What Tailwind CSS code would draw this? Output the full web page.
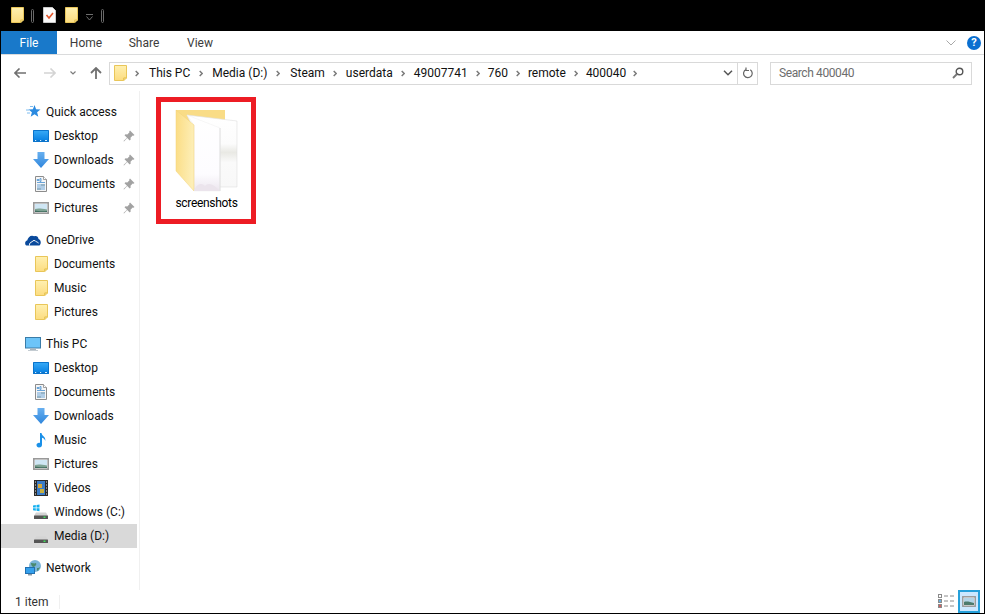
<!DOCTYPE html>
<html>
<head>
<meta charset="utf-8">
<title>400040</title>
<script src="https://cdn.jsdelivr.net/npm/@tailwindcss/browser@4"></script>
</head>
<body class="m-0 bg-black">
<svg class="absolute w-0 h-0" aria-hidden="true">
  <defs>
    <linearGradient id="gFolder" x1="0" y1="0" x2="0" y2="1"><stop offset="0" stop-color="#fff0b0"/><stop offset="1" stop-color="#fcdc80"/></linearGradient>
    <linearGradient id="gBlue" x1="0" y1="0" x2="0" y2="1"><stop offset="0" stop-color="#35a8f6"/><stop offset="1" stop-color="#0c84e4"/></linearGradient>
    <linearGradient id="gArrow" x1="0" y1="0" x2="0" y2="1"><stop offset="0" stop-color="#68b0f0"/><stop offset="1" stop-color="#2f86dc"/></linearGradient>
    <linearGradient id="gPanel" x1="0" y1="0" x2="1" y2="0.2"><stop offset="0" stop-color="#fbdc82"/><stop offset="1" stop-color="#fdeeb6"/></linearGradient>
    <linearGradient id="gPaper" x1="0" y1="0" x2="0" y2="1"><stop offset="0" stop-color="#ffffff"/><stop offset="0.78" stop-color="#fdfcff"/><stop offset="1" stop-color="#ece6ee"/></linearGradient>
    <linearGradient id="gBack" x1="0" y1="0" x2="0" y2="1"><stop offset="0" stop-color="#ffffff"/><stop offset="0.4" stop-color="#fcfcfc"/><stop offset="0.52" stop-color="#e9e9e4"/><stop offset="0.66" stop-color="#fafafa"/><stop offset="1" stop-color="#f8f8f8"/></linearGradient>
    <symbol id="folder" viewBox="0 0 13 16">
      <path d="M.5.500h12v12.500h-3v2.500H.5z" fill="url(#gFolder)" stroke="#e9c659"/>
      <path d="M10 15.500v-2.500h2.500z" fill="#f6dc8c" stroke="#e9c659" stroke-width=".8"/>
    </symbol>
    <symbol id="crumb" viewBox="0 0 4 7">
      <path d="M.7 1l2.500 2.500L.7 6" fill="none" stroke="#7a7a7a" stroke-width="1.500"/>
    </symbol>
    <symbol id="desktop" viewBox="0 0 16 16">
      <rect x="0" y="2" width="16" height="12" rx=".5" fill="#0a74cc"/>
      <rect x="1" y="3" width="14" height="9" fill="url(#gBlue)"/>
      <path d="M2 12.500h1.200M7 12.500h1.200M12 12.500h2" stroke="#d8f0ff" stroke-width="1"/>
    </symbol>
    <symbol id="download" viewBox="0 0 16 16">
      <path d="M4.500 0h7v7H16l-8 9-8-9h4.500z" fill="url(#gArrow)"/>
    </symbol>
    <symbol id="doc" viewBox="0 0 16 16">
      <path d="M2.500.500h8l3 3v12h-11z" fill="#f6f6f6" stroke="#8c8c8c"/>
      <path d="M10.500.500v3h3" fill="#fff" stroke="#8c8c8c" stroke-width=".8"/>
      <path d="M4 3.500h2v1H4zM7 2.500h1v3H7zM4 6.500h8M4 9h8M4 11h8M4 13h8" stroke="#6aa4d8" stroke-width="1" fill="none"/>
      <path d="M8 9h4M4 13h4" stroke="#7a9aa8" stroke-width="1"/>
    </symbol>
    <symbol id="picture" viewBox="0 0 16 16">
      <rect x=".8" y="2.800" width="14.400" height="10.400" fill="#fff" stroke="#999" stroke-width="1.600"/>
      <rect x="2" y="4" width="12" height="8" fill="#cfe6f4"/>
      <path d="M2 9c3-1 6-.5 12 .5V12H2z" fill="#7fa394"/>
      <path d="M2 10.500c3 .5 7 1 12 .5V12H2z" fill="#3f6c5e"/>
    </symbol>
    <symbol id="pin" viewBox="0 0 12 12">
      <path d="M7 .5l4.500 4.500-1 .8-.8-.3-2.200 2.200.2 1.800-1 1L4.200 8 1 11.500.5 11 4 7.800 1.500 5.300l1-1 1.800.2 2.200-2.200-.3-.8z" fill="#a2a2a2"/>
    </symbol>
    <symbol id="drive" viewBox="0 0 16 16">
      <path d="M3 8.500h10l2 3.500H1z" fill="#d4d4d4"/>
      <rect x="1" y="11.500" width="14" height="3.500" rx=".5" fill="#555"/>
      <rect x="10.500" y="12.500" width="2" height="1.500" fill="#3fe05a"/>
    </symbol>
  </defs>
</svg>

<div class="w-[985px] h-[614px] bg-black flex flex-col px-px pb-px overflow-hidden text-[12px] leading-none text-[#111]" style="font-family:Roboto,'Noto Sans',sans-serif">

  <!-- Title bar -->
  <div class="h-[31px] shrink-0 flex items-start">
    <svg class="w-[13px] h-4 mt-[7px] ml-[10px]"><use href="#folder"/></svg>
    <div class="w-[3px] h-[14px] mt-[9px] ml-[7px] rounded-sm border border-[#6a6a6a]"></div>
    <svg class="w-[13px] h-4 mt-[7px] ml-[9px]" viewBox="0 0 13 16">
      <path d="M.5.500h9l3 3v12H.5z" fill="#fafafa" stroke="#c9c9c9"/>
      <path d="M3.500 8l2.500 3 4-5" fill="none" stroke="#e2542a" stroke-width="1.600"/>
    </svg>
    <svg class="w-[13px] h-4 mt-[7px] ml-[9px]"><use href="#folder"/></svg>
    <svg class="w-[7px] h-[7px] mt-[14px] ml-[8px]" viewBox="0 0 7 7">
      <path d="M0 .5h7M.5 2.500l3 3.500 3-3.500" fill="none" stroke="#6e6e6e"/>
    </svg>
    <div class="w-[3px] h-[14px] mt-[9px] ml-[8px] rounded-sm border border-[#6a6a6a]"></div>
  </div>

  <!-- Ribbon tabs -->
  <div class="h-6 shrink-0 bg-white border-b border-[#dadbdc] flex items-center text-[#3c3c3c]">
    <div class="w-14 h-[23px] bg-[#1979ca] text-white flex items-center justify-center">File</div>
    <div class="w-[58px] h-[23px] flex items-center justify-center">Home</div>
    <div class="w-[58px] h-[23px] flex items-center justify-center">Share</div>
    <div class="w-[54px] h-[23px] flex items-center justify-center">View</div>
    <div class="flex-1"></div>
    <svg class="w-[10px] h-[6px] mr-[11px]" viewBox="0 0 10 6"><path d="M.5.500l4.500 4.500 4.500-4.500" fill="none" stroke="#a8a8a8"/></svg>
    <div class="w-[14px] h-[14px] mr-[3px] rounded-full bg-[#0a6fd0] text-white font-bold text-[11px] flex items-center justify-center">?</div>
  </div>

  <!-- Address row -->
  <div class="h-[36px] shrink-0 bg-white flex items-center">
    <svg class="w-3 h-[10px] ml-[13px]" viewBox="0 0 12 10"><path d="M5.500.500L1 5l4.500 4.500M1 5h11" fill="none" stroke="#707070" stroke-width="1.600"/></svg>
    <svg class="w-3 h-[10px] ml-[18px]" viewBox="0 0 12 10"><path d="M6.500.500L11 5 6.500 9.500M11 5H0" fill="none" stroke="#d4d4d4" stroke-width="1.600"/></svg>
    <svg class="w-[6px] h-1 ml-[14px]" viewBox="0 0 6 4"><path d="M.5.500L3 3 5.500.500" fill="none" stroke="#7c7c7c" stroke-width="1.200"/></svg>
    <svg class="w-3 h-3 ml-[14px]" viewBox="0 0 12 12"><path d="M1 6l5-5 5 5M6 1v11" fill="none" stroke="#707070" stroke-width="1.800"/></svg>
    <!-- Address box -->
    <div class="w-[649px] h-[23px] ml-[7px] border border-[#d9d9d9] flex items-center">
      <svg class="w-[13px] h-4 ml-[4px] shrink-0"><use href="#folder"/></svg>
      <div class="flex-1 flex items-center pl-2">
        <svg class="w-1 h-[7px] shrink-0"><use href="#crumb"/></svg><span class="ml-[10px]">This PC</span>
        <svg class="w-1 h-[7px] shrink-0 ml-[9px]"><use href="#crumb"/></svg><span class="ml-[9px]">Media (D:)</span>
        <svg class="w-1 h-[7px] shrink-0 ml-[9px]"><use href="#crumb"/></svg><span class="ml-[10px]">Steam</span>
        <svg class="w-1 h-[7px] shrink-0 ml-[8px]"><use href="#crumb"/></svg><span class="ml-[9px]">userdata</span>
        <svg class="w-1 h-[7px] shrink-0 ml-[8px]"><use href="#crumb"/></svg><span class="ml-[9px]">49007741</span>
        <svg class="w-1 h-[7px] shrink-0 ml-[8px]"><use href="#crumb"/></svg><span class="ml-[8px]">760</span>
        <svg class="w-1 h-[7px] shrink-0 ml-[8px]"><use href="#crumb"/></svg><span class="ml-[8px]">remote</span>
        <svg class="w-1 h-[7px] shrink-0 ml-[8px]"><use href="#crumb"/></svg><span class="ml-[8px]">400040</span>
        <svg class="w-1 h-[7px] shrink-0 ml-[7px]"><use href="#crumb"/></svg>
      </div>
      <svg class="w-[10px] h-[6px]" viewBox="0 0 10 6"><path d="M1 .8L5 4.800 9 .8" fill="none" stroke="#555" stroke-width="1.500"/></svg>
      <div class="w-px h-[21px] bg-[#d9d9d9] ml-1"></div>
      <svg class="w-[10px] h-3 ml-[5px] mr-1" viewBox="0 0 10 12"><path d="M3 2.500A4.300 4.300 0 1 0 7.300 2.800M3 .5v3h3" fill="none" stroke="#666" stroke-width="1.200"/></svg>
    </div>
    <!-- Search -->
    <div class="w-[202px] h-[23px] ml-3 border border-[#d9d9d9] flex items-center pl-2 pr-[7px] text-[#6d6d6d]">
      <span class="flex-1 tracking-[-0.4px]">Search 400040</span>
      <svg class="w-3 h-3" viewBox="0 0 12 12"><circle cx="7.500" cy="4.500" r="3.300" fill="none" stroke="#555" stroke-width="1.400"/><path d="M5 7l-4 4" stroke="#777" stroke-width="1.800"/></svg>
    </div>
  </div>

  <!-- Main -->
  <div class="flex-1 flex bg-white min-h-0">
    <!-- Navigation pane -->
    <nav class="w-[139px] shrink-0 border-r border-[#f0f0f0] pt-[9px] flex flex-col gap-2">
      <div class="w-[136px]">
        <div class="h-6 flex items-center pl-[24px]">
          <svg class="w-4 h-4 mr-[5px]" viewBox="0 0 16 16"><path d="M9.500 1l1.600 4.200L15.500 5.500l-3.400 2.800 1.200 4.500L9.500 10.300 5.700 12.800l1.200-4.500L3.500 5.500l4.400-.3z" fill="#2a8ae0"/><path d="M1 6h3M2 9h3M5 2.500h3" stroke="#7dbcf0" stroke-width="1"/></svg>
          Quick access
        </div>
        <div class="h-6 flex items-center pl-[32px]"><svg class="w-4 h-4 mr-[5px]"><use href="#desktop"/></svg>Desktop<span class="flex-1"></span><svg class="w-3 h-3 mr-[2px]"><use href="#pin"/></svg></div>
        <div class="h-6 flex items-center pl-[32px]"><svg class="w-4 h-4 mr-[5px]"><use href="#download"/></svg>Downloads<span class="flex-1"></span><svg class="w-3 h-3 mr-[2px]"><use href="#pin"/></svg></div>
        <div class="h-6 flex items-center pl-[32px]"><svg class="w-4 h-4 mr-[5px]"><use href="#doc"/></svg>Documents<span class="flex-1"></span><svg class="w-3 h-3 mr-[2px]"><use href="#pin"/></svg></div>
        <div class="h-6 flex items-center pl-[32px]"><svg class="w-4 h-4 mr-[5px]"><use href="#picture"/></svg>Pictures<span class="flex-1"></span><svg class="w-3 h-3 mr-[2px]"><use href="#pin"/></svg></div>
      </div>
      <div class="w-[136px]">
        <div class="h-6 flex items-center pl-[24px]">
          <svg class="w-4 h-4 mr-[5px]" viewBox="0 0 16 16"><path d="M1.500 13.500C-.5 12.500-.3 9 2.200 8.500 3 5 6 2.500 9.300 4.300c2.200-.8 4 .6 4.200 2.700 2.300.5 3.200 4.500 1 6.500z" fill="#0a4a9c"/><path d="M4.500 13.500c-.3-2 .8-3.300 2.300-3.500 1-2 3.500-2 4.500-.2 1 0 1.700.5 2 1.500" fill="none" stroke="#fff" stroke-width="1"/></svg>
          OneDrive
        </div>
        <div class="h-6 flex items-center pl-[34px]"><svg class="w-[13px] h-4 mr-[6px]"><use href="#folder"/></svg>Documents</div>
        <div class="h-6 flex items-center pl-[34px]"><svg class="w-[13px] h-4 mr-[6px]"><use href="#folder"/></svg>Music</div>
        <div class="h-6 flex items-center pl-[34px]"><svg class="w-[13px] h-4 mr-[6px]"><use href="#folder"/></svg>Pictures</div>
      </div>
      <div class="w-[136px]">
        <div class="h-6 flex items-center pl-[24px]">
          <svg class="w-4 h-4 mr-[5px]" viewBox="0 0 16 16"><rect x=".5" y="1.500" width="15" height="10.500" fill="#6cc4f8" stroke="#3a7ca8"/><rect x="5" y="12.500" width="6" height="1.500" fill="#a8b4bc"/><rect x="3" y="14" width="10" height="1" fill="#c4ccd2"/></svg>
          This PC
        </div>
        <div class="h-6 flex items-center pl-[32px]"><svg class="w-4 h-4 mr-[5px]"><use href="#desktop"/></svg>Desktop</div>
        <div class="h-6 flex items-center pl-[32px]"><svg class="w-4 h-4 mr-[5px]"><use href="#doc"/></svg>Documents</div>
        <div class="h-6 flex items-center pl-[32px]"><svg class="w-4 h-4 mr-[5px]"><use href="#download"/></svg>Downloads</div>
        <div class="h-6 flex items-center pl-[32px]"><svg class="w-4 h-4 mr-[5px]" viewBox="0 0 16 16"><path d="M7 1h1.500c.3 3 4.500 3.500 3.800 8-.5-2-2-3-3.300-3.200V13c0 1.700-1.500 2.500-3 2.500S3.500 14.500 3.500 13c0-1.500 1.800-2.600 3.500-2z" fill="#1a90e8"/></svg>Music</div>
        <div class="h-6 flex items-center pl-[32px]"><svg class="w-4 h-4 mr-[5px]"><use href="#picture"/></svg>Pictures</div>
        <div class="h-6 flex items-center pl-[32px]"><svg class="w-4 h-4 mr-[5px]" viewBox="0 0 16 16"><rect x="1" y="0" width="14" height="16" fill="#2a2a2a"/><rect x="4" y="1" width="8" height="14" fill="#3a7cc8"/><rect x="5" y="4" width="4" height="4" fill="#d8a838"/><rect x="7" y="9" width="4" height="4" fill="#c8b040"/><path d="M2 2h1M2 5h1M2 8h1M2 11h1M2 14h1M13 2h1M13 5h1M13 8h1M13 11h1M13 14h1" stroke="#e8e8e8" stroke-width="1.200"/></svg>Videos</div>
        <div class="h-6 flex items-center pl-[32px]"><svg class="w-4 h-4 mr-[5px]" viewBox="0 0 16 16"><use href="#drive"/><path d="M0 1.500l2.800-.5v2.500H0zM3.500 1l3-.5v3h-3zM0 4.200h2.800v2.500L0 6.300zM3.500 4.200h3v3l-3-.5z" fill="#12b0f0"/></svg>Windows (C:)</div>
        <div class="h-6 flex items-center pl-[32px] bg-[#d9d9d9]"><svg class="w-4 h-4 mr-[5px]"><use href="#drive"/></svg>Media (D:)</div>
      </div>
      <div class="w-[136px]">
        <div class="h-6 flex items-center pl-[24px]">
          <svg class="w-4 h-4 mr-[5px]" viewBox="0 0 16 16"><circle cx="10" cy="6" r="6" fill="#7ab4d8"/><path d="M6 3c2 0 3 1 5 0 1 2-1 3-2 4-2 0-3-2-3-4zM12 8c1 0 2 0 3-1-.5 2-2 3.500-3 4z" fill="#4a8a70"/><rect x=".5" y="7.500" width="9" height="6" fill="#35a0ec" stroke="#2270b0"/><rect x="3" y="14" width="4" height="1.500" fill="#8a9aa6"/></svg>
          Network
        </div>
      </div>
    </nav>

    <!-- Content -->
    <main class="flex-1 pl-4 pt-[6px]">
      <div class="w-[100px] h-[127px] border-[5px] border-[#ed1c24] flex flex-col items-center">
        <svg class="w-[75px] h-[92px] mt-[3px] shrink-0 self-start ml-[9px]" viewBox="0 0 75 92">
          <path d="M6 5h49v16H6z" fill="#f9dc86"/>
          <path d="M17 10l50 6v66H50z" fill="url(#gBack)" stroke="#dfdfdf" stroke-width=".6"/>
          <path d="M17 10l33 13v63H24V20z" fill="url(#gPaper)" stroke="#ececec" stroke-width=".4"/>
          <path d="M50 23v63" stroke="#e0e0e0" stroke-width="1"/>
          <path d="M6 5l18 15v66L6 66z" fill="url(#gPanel)" stroke="#f2d27a" stroke-width=".5"/>
          <path d="M24 86c2-7 8-9 11-5 3-4 9-2 15 5z" fill="#ebe4ec"/>
        </svg>
        <div class="ml-px text-center text-black tracking-[-0.3px]">screenshots</div>
      </div>
    </main>
  </div>

  <!-- Status bar -->
  <div class="h-[23px] shrink-0 bg-white flex items-center text-[#333]">
    <span class="ml-[14px]">1 item</span>
    <div class="w-px h-[14px] bg-[#f0f0f0] ml-[11px]"></div>
    <div class="flex-1"></div>
    <svg class="w-[17px] h-[15px]" viewBox="0 0 17 15">
      <rect x=".5" y=".5" width="3" height="3" fill="#fff" stroke="#8a8a8a"/><rect x=".5" y="5.500" width="3" height="3" fill="#6ab0e0" stroke="#8a8a8a"/><rect x=".5" y="10.500" width="3" height="3" fill="#d06060" stroke="#8a8a8a"/>
      <path d="M6 2h4M12 2h4M6 7h4M12 7h4M6 12h4M12 12h4" stroke="#8a8a8a"/>
    </svg>
    <div class="w-[22px] h-[23px] ml-[3px] mr-[4px] bg-[#cce8ff] border-2 border-[#26a0da] flex items-center justify-center">
      <svg class="w-[14px] h-[11px]" viewBox="0 0 14 11"><rect x=".8" y=".8" width="12.400" height="9.400" fill="#fff" stroke="#999" stroke-width="1.500"/><rect x="2" y="2" width="10" height="7" fill="#b4d4e6"/><path d="M2 6c3-1 6 0 10 1v2H2z" fill="#4d7a6c"/></svg>
    </div>
  </div>
</div>
</body>
</html>
